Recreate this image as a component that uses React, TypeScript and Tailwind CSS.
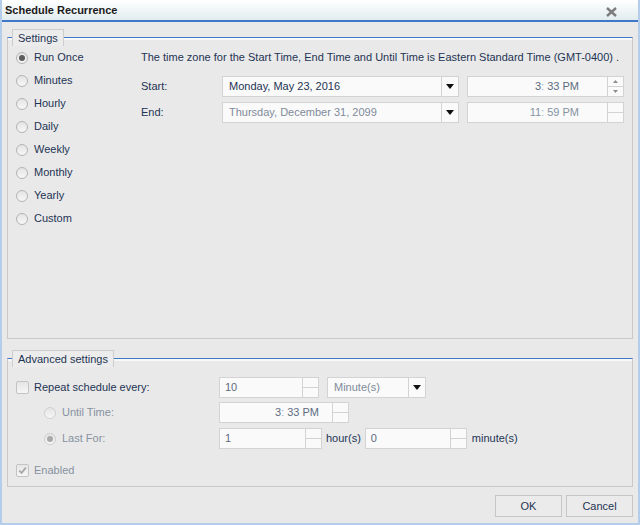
import React from "react";

const navy = "text-[#1e3453]";

function Radio({ checked = false, disabled = false }: { checked?: boolean; disabled?: boolean }) {
  return (
    <span
      className={`flex h-[12px] w-[12px] shrink-0 items-center justify-center rounded-full border ${
        disabled ? "border-[#cfcfcf]" : "border-[#b4b4b4]"
      } bg-gradient-to-b from-[#e4e4e4] to-[#f7f7f7]`}
    >
      {checked && (
        <span className={`h-[6px] w-[6px] rounded-full ${disabled ? "bg-[#a9a9a9]" : "bg-[#5c5c5c]"}`} />
      )}
    </span>
  );
}

function Check({ checked = false }: { checked?: boolean }) {
  return (
    <span className="flex h-[13px] w-[13px] shrink-0 items-center justify-center rounded-[2px] border border-[#c3c3c3] bg-gradient-to-b from-[#e6e6e6] to-[#f6f6f6]">
      {checked && (
        <svg width="9" height="9" viewBox="0 0 9 9">
          <path d="M1.2 4.6 L3.6 7 L7.8 1.6" fill="none" stroke="#a6a6a6" strokeWidth="1.8" />
        </svg>
      )}
    </span>
  );
}

function Spinner({ arrows = false }: { arrows?: boolean }) {
  return (
    <div className="flex w-[16px] shrink-0 flex-col border-l border-[#d3d3d3]">
      <div className="flex flex-1 items-center justify-center border-b border-[#d3d3d3]">
        {arrows && (
          <svg width="5" height="3" viewBox="0 0 5 3">
            <path d="M0 3 L2.5 0 L5 3 Z" fill="#8d8d8d" />
          </svg>
        )}
      </div>
      <div className="flex flex-1 items-center justify-center">
        {arrows && (
          <svg width="5" height="3" viewBox="0 0 5 3">
            <path d="M0 0 L2.5 3 L5 0 Z" fill="#8d8d8d" />
          </svg>
        )}
      </div>
    </div>
  );
}

function DropArrow() {
  return (
    <div className="flex w-[17px] shrink-0 items-center justify-center border-l border-[#d3d3d3]">
      <svg width="8" height="5" viewBox="0 0 8 5">
        <path d="M0 0 H8 L4 5 Z" fill="#111" />
      </svg>
    </div>
  );
}

function Box({ w, children, className = "" }: { w: string; children: React.ReactNode; className?: string }) {
  return (
    <div className={`flex h-[21px] ${w} shrink-0 border border-[#d3d3d3] bg-[#fafafa] ${className}`}>{children}</div>
  );
}

function Time({ h, m, dim }: { h: string; m: string; dim?: boolean }) {
  return (
    <span className={dim ? "text-[#8592a3]" : "text-[#5d6b80]"}>
      {h}
      <span className="text-[#8fb0d4]">:</span> {m} PM
    </span>
  );
}

const options = ["Run Once", "Minutes", "Hourly", "Daily", "Weekly", "Monthly", "Yearly", "Custom"];

export default function App() {
  return (
    <div className="flex h-[525px] w-[640px] flex-col border-x-2 border-b-2 border-[#b3cdea] bg-[#e9e9ea] font-['Liberation_Sans',Arial,sans-serif] text-[11px]">
      <div className="flex h-[20px] shrink-0 items-center justify-between bg-gradient-to-b from-[#ffffff] to-[#e1ecef] pl-[3px] pr-[21px]">
        <span className="text-[11px] font-bold text-[#1b1b1b]">Schedule Recurrence</span>
        <svg width="11" height="10" viewBox="0 0 11 10" className="mt-[4px]">
          <path d="M1 1 L10 9 M10 1 L1 9" stroke="#7d7d7d" strokeWidth="2.4" />
        </svg>
      </div>
      <div className="h-[2px] shrink-0 bg-[#3f78c9]" />

      <fieldset className="mx-[5px] mt-[7px] h-[310px] min-w-0 border border-[#c9c9c9] border-t-[#3f78c9] p-0 shadow-[inset_0_2px_0_#f7f8f8]">
        <legend className="ml-[4px] h-[17px] border border-b-0 border-[#cdcdcd] bg-[#ececec] px-[5px] leading-[16px] text-[#1e3453]">
          Settings
        </legend>
        <div className="flex">
          <div className="flex w-[133px] flex-col pl-[8px]">
            {options.map((o, i) => (
              <label key={o} className={`flex h-[23px] items-center gap-[6px] ${navy}`}>
                <Radio checked={i === 0} />
                {o}
              </label>
            ))}
          </div>
          <div className="flex flex-col">
            <div className={`flex h-[23px] items-center ${navy}`}>
              The time zone for the Start Time, End Time and Until Time is Eastern Standard Time (GMT-0400) .
            </div>
            <div className="mt-[7px] flex flex-col gap-[5px]">
              <div className="flex items-center">
                <span className={`w-[81px] ${navy}`}>Start:</span>
                <Box w="w-[237px]">
                  <span className={`flex flex-1 items-center pl-[6px] ${navy}`}>Monday, May 23, 2016</span>
                  <DropArrow />
                </Box>
                <Box w="w-[157px]" className="ml-[8px]">
                  <span className="flex flex-1 items-center justify-end pr-[28px]">
                    <Time h="3" m="33" />
                  </span>
                  <Spinner arrows />
                </Box>
              </div>
              <div className="flex items-center">
                <span className={`w-[81px] ${navy}`}>End:</span>
                <Box w="w-[237px]">
                  <span className="flex flex-1 items-center pl-[6px] text-[#7e8a9a]">Thursday, December 31, 2099</span>
                  <DropArrow />
                </Box>
                <Box w="w-[157px]" className="ml-[8px]">
                  <span className="flex flex-1 items-center justify-end pr-[28px]">
                    <Time h="11" m="59" dim />
                  </span>
                  <Spinner />
                </Box>
              </div>
            </div>
          </div>
        </div>
      </fieldset>

      <fieldset className="mx-[5px] mt-[11px] h-[137px] min-w-0 border border-[#c9c9c9] border-t-[#3f78c9] p-0 shadow-[inset_0_2px_0_#f7f8f8]">
        <legend className="ml-[4px] h-[17px] border border-b-0 border-[#cdcdcd] bg-[#ececec] px-[5px] leading-[16px] text-[#1e3453]">
          Advanced settings
        </legend>
        <div className="flex flex-col pl-[8px]">
          <div className="mt-[10px] flex h-[21px] items-center">
            <label className={`flex w-[203px] items-center gap-[5px] ${navy}`}>
              <Check />
              Repeat schedule every:
            </label>
            <Box w="w-[100px]">
              <span className="flex flex-1 items-center pl-[5px] text-[#5d6b80]">10</span>
              <Spinner />
            </Box>
            <Box w="w-[99px]" className="ml-[8px]">
              <span className="flex flex-1 items-center pl-[6px] text-[#7e8a9a]">Minute(s)</span>
              <DropArrow />
            </Box>
          </div>
          <div className="mt-[4px] flex h-[21px] items-center">
            <label className="flex w-[203px] items-center gap-[6px] pl-[28px] text-[#8792a0]">
              <Radio disabled />
              Until Time:
            </label>
            <Box w="w-[130px]">
              <span className="flex flex-1 items-center justify-end pr-[13px]">
                <Time h="3" m="33" />
              </span>
              <Spinner />
            </Box>
          </div>
          <div className="mt-[5px] flex h-[21px] items-center">
            <label className="flex w-[203px] items-center gap-[6px] pl-[28px] text-[#8792a0]">
              <Radio checked disabled />
              Last For:
            </label>
            <Box w="w-[103px]">
              <span className="flex flex-1 items-center pl-[5px] text-[#5d6b80]">1</span>
              <Spinner />
            </Box>
            <span className={`ml-[4px] ${navy}`}>hour(s)</span>
            <Box w="w-[102px]" className="ml-[4px]">
              <span className="flex flex-1 items-center pl-[5px] text-[#5d6b80]">0</span>
              <Spinner />
            </Box>
            <span className={`ml-[5px] ${navy}`}>minute(s)</span>
          </div>
          <div className="mt-[11px] flex h-[21px] items-center">
            <label className="flex items-center gap-[5px] text-[#8792a0]">
              <Check checked />
              Enabled
            </label>
          </div>
        </div>
      </fieldset>

      <div className="mr-[5px] mt-[8px] flex justify-end gap-[4px]">
        <button className={`h-[22px] w-[67px] border border-[#c6c6c6] bg-[#ebebeb] ${navy}`}>OK</button>
        <button className={`h-[22px] w-[67px] border border-[#c6c6c6] bg-[#ebebeb] ${navy}`}>Cancel</button>
      </div>
    </div>
  );
}
